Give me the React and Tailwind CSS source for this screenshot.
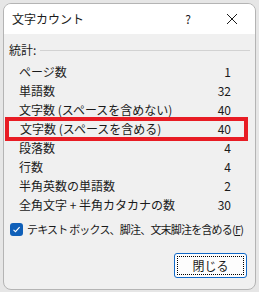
export default function App() {
  const rows = [
    ["ページ数", "1"],
    ["単語数", "32"],
    ["文字数 (スペースを含めない)", "40"],
    ["文字数 (スペースを含める)", "40", true],
    ["段落数", "4"],
    ["行数", "4"],
    ["半角英数の単語数", "2"],
    ["全角文字 + 半角カタカナの数", "30"],
  ];
  const font = { fontFamily: '"Noto Sans CJK JP", "Noto Sans", sans-serif' };
  return (
    <div className="w-[259px] h-[292px] bg-[#e6e6e6] p-[3px] text-[#1a1a1a]" style={font}>
      <div className="w-[253px] h-[287px] rounded-[8px] border border-[#b4b4b4] overflow-hidden flex flex-col bg-[#f0f0f0]">
        <div className="h-[30px] bg-white flex items-center pl-[8px] shrink-0">
          <span className="text-[12px] leading-none">文字カウント</span>
          <span className="ml-auto w-[20px] text-center text-[12px] mr-[28px] leading-none">?</span>
          <svg width="12" height="12" viewBox="0 0 12 12" className="mr-[17px]">
            <path d="M1 1 L11 11 M11 1 L1 11" stroke="#1a1a1a" strokeWidth="1" />
          </svg>
        </div>
        <div className="flex-1 flex flex-col pt-[6px]">
          <div className="flex items-center pl-[5px] pr-[5px] h-[20px]">
            <span className="text-[12px]">統計:</span>
            <div className="flex-1 h-px bg-[#d2d2d2] ml-[4px]" />
          </div>
          <div className="flex flex-col mt-[2px]">
            {rows.map(([label, val, hl]) => (
              <div
                key={label}
                className={
                  hl
                    ? "h-[24px] -my-[2.5px] ml-[1px] mr-[7px] border-[4px] border-[#e81c24] flex items-center pl-[11px] pr-[13px] relative z-10"
                    : "h-[19px] flex items-center pl-[15px] pr-[24px]"
                }
              >
                <span className="text-[12px] leading-none whitespace-nowrap">{label}</span>
                <span className="ml-auto text-[12px] leading-none">{val}</span>
              </div>
            ))}
          </div>
          <div className="flex items-center mt-[9px] pl-[6px]">
            <div className="w-[13px] h-[13px] shrink-0 rounded-[3px] bg-[#0f5fb8] flex items-center justify-center">
              <svg width="9" height="9" viewBox="0 0 9 9">
                <path d="M1.5 4.8 L3.5 6.7 L7.6 2.2" stroke="white" strokeWidth="1.1" fill="none" />
              </svg>
            </div>
            <span className="ml-[4px] text-[11px] leading-none tracking-[-0.8px] whitespace-nowrap">
              テキスト ボックス、脚注、文末脚注を含める(<span className="underline">F</span>)
            </span>
          </div>
          <div className="flex justify-end pr-[8px] mt-[17px]">
            <div className="w-[73px] h-[25px] rounded-[3px] border border-[#1068c8] bg-[#fdfdfd] p-[2px]">
              <div className="w-full h-full border border-dotted border-black flex items-center justify-center text-[12px]">
                閉じる
              </div>
            </div>
          </div>
        </div>
      </div>
    </div>
  );
}
